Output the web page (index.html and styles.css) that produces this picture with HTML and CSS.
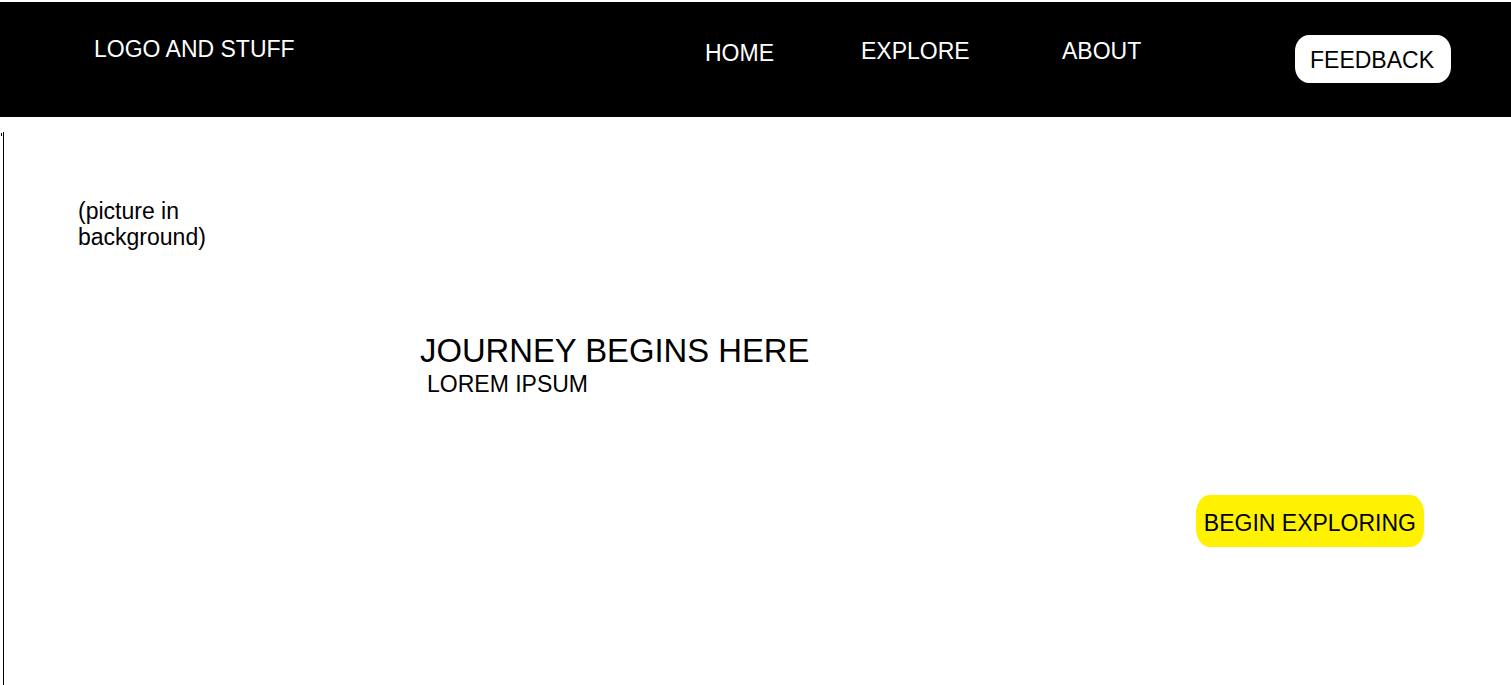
FILE: index.html
```html
<!DOCTYPE html>
<html lang="en">
<head>
<meta charset="utf-8">
<title>Journey Begins Here</title>
<link rel="stylesheet" href="styles.css">
</head>
<body>
<header class="topbar">
  <div class="logo">LOGO AND STUFF</div>
  <nav class="nav">
    <a class="nav-link nav-home" href="#">HOME</a>
    <a class="nav-link nav-explore" href="#">EXPLORE</a>
    <a class="nav-link nav-about" href="#">ABOUT</a>
  </nav>
  <a class="feedback" href="#">FEEDBACK</a>
</header>
<main class="hero">
  <span class="tick"></span>
  <p class="picture-note">(picture in<br>background)</p>
  <div class="hero-text">
    <h1 class="hero-title">JOURNEY BEGINS HERE</h1>
    <p class="hero-sub">LOREM IPSUM</p>
  </div>
  <div class="cta-row">
    <a class="cta" href="#">BEGIN EXPLORING</a>
  </div>
</main>
</body>
</html>
```

FILE: styles.css
```css
* { box-sizing: border-box; }

html, body {
  margin: 0;
  padding: 0;
  background: #ffffff;
}

body {
  font-family: "Liberation Sans", Arial, sans-serif;
  font-size: 23px;
  line-height: 26px;
  color: #000000;
  padding-top: 2px;
  height: 685px;
  overflow: hidden;
}

a { color: inherit; text-decoration: none; }

.topbar {
  display: flex;
  align-items: flex-start;
  height: 115px;
  background: #000000;
  color: #ffffff;
  padding-left: 94px;
}

.logo {
  margin-top: 34px;
  width: 611px;
}

.nav {
  display: flex;
  align-items: flex-start;
}

.nav-link { display: block; }

.nav-home { margin-top: 38px; width: 156px; }
.nav-explore { margin-top: 36px; width: 201px; }
.nav-about { margin-top: 36px; width: 233px; }

.feedback {
  display: block;
  margin-top: 33px;
  background: #ffffff;
  color: #000000;
  padding: 12px 17px 10px 15px;
  border-radius: 14px / 16px;
}

.hero {
  position: relative;
  margin-top: 15px;
  margin-left: 3px;
  border-left: 1px solid #000000;
  height: 560px;
  padding-left: 74px;
}

.tick {
  position: absolute;
  left: -3px;
  top: 1px;
  width: 1px;
  height: 3px;
  background: #000000;
}

.picture-note {
  margin: 0;
  padding-top: 66px;
}

.hero-text {
  margin-top: 82px;
  padding-left: 342px;
}

.hero-title {
  margin: 0;
  font-size: 32.8px;
  line-height: 37px;
  font-weight: normal;
}

.hero-sub {
  margin: 2px 0 0 0;
  padding-left: 7px;
}

.cta-row {
  display: flex;
  justify-content: flex-end;
  padding-right: 87px;
  margin-top: 98px;
}

.cta {
  display: block;
  background: #fff200;
  color: #000000;
  padding: 15px 8px 11px 8px;
  border-radius: 14px / 18px;
}
```
